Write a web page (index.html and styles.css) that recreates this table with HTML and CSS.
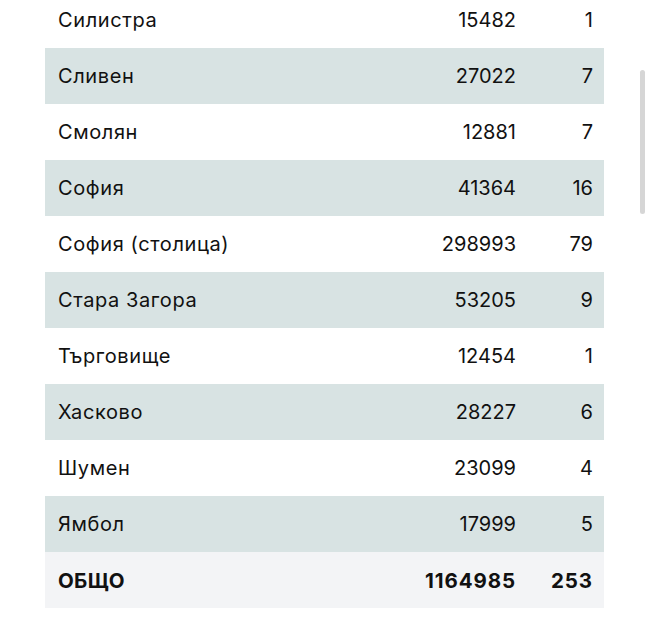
FILE: index.html
```html
<!DOCTYPE html>
<html lang="bg">
<head>
<meta charset="utf-8">
<title>Области</title>
<link rel="stylesheet" href="styles.css">
</head>
<body>
<div class="page">
  <table class="stats">
    <colgroup>
      <col class="c-name">
      <col class="c-num">
      <col class="c-cnt">
    </colgroup>
    <tbody>
      <tr><td class="name">Силистра</td><td class="num">15482</td><td class="num">1</td></tr>
      <tr class="alt"><td class="name">Сливен</td><td class="num">27022</td><td class="num">7</td></tr>
      <tr><td class="name">Смолян</td><td class="num">12881</td><td class="num">7</td></tr>
      <tr class="alt"><td class="name">София</td><td class="num">41364</td><td class="num">16</td></tr>
      <tr><td class="name">София (столица)</td><td class="num">298993</td><td class="num">79</td></tr>
      <tr class="alt"><td class="name">Стара Загора</td><td class="num">53205</td><td class="num">9</td></tr>
      <tr><td class="name">Търговище</td><td class="num">12454</td><td class="num">1</td></tr>
      <tr class="alt"><td class="name">Хасково</td><td class="num">28227</td><td class="num">6</td></tr>
      <tr><td class="name">Шумен</td><td class="num">23099</td><td class="num">4</td></tr>
      <tr class="alt"><td class="name">Ямбол</td><td class="num">17999</td><td class="num">5</td></tr>
      <tr class="total"><td class="name">ОБЩО</td><td class="num">1164985</td><td class="num">253</td></tr>
    </tbody>
  </table>
  <div class="thumb"></div>
</div>
</body>
</html>
```
FILE: styles.css
```css
html, body {
  margin: 0;
  padding: 0;
  background: #ffffff;
  overflow: hidden;
}
body {
  font-family: Inter, "Noto Sans", "Liberation Sans", sans-serif;
  color: #111111;
}
.page {
  position: relative;
  width: 650px;
  height: 619px;
  padding: 0 46px 0 45px;
  box-sizing: border-box;
}
.stats {
  width: 559px;
  margin-top: -8px;
  border-collapse: collapse;
  table-layout: fixed;
  font-size: 20px;
}
.c-num { width: 150px; }
.c-cnt { width: 77px; }
.stats td {
  height: 56px;
  padding: 0 11px 0 13px;
  box-sizing: border-box;
  vertical-align: middle;
  white-space: nowrap;
}
.stats td.name { letter-spacing: 0.6px; }
.stats td.num { text-align: right; letter-spacing: 0; }
.stats tr.alt { background: #d8e3e3; }
.stats tr.total {
  background: #f3f4f6;
  font-weight: 700;
  font-size: 20.5px;
}
.stats tr.total td.num { letter-spacing: 0.9px; }
.stats tr.total td.name { letter-spacing: 0.3px; }
.thumb {
  position: absolute;
  left: 640px;
  top: 78px;
  width: 5px;
  height: 144px;
  border-radius: 3px;
  background: #d6d6d6;
}
```
